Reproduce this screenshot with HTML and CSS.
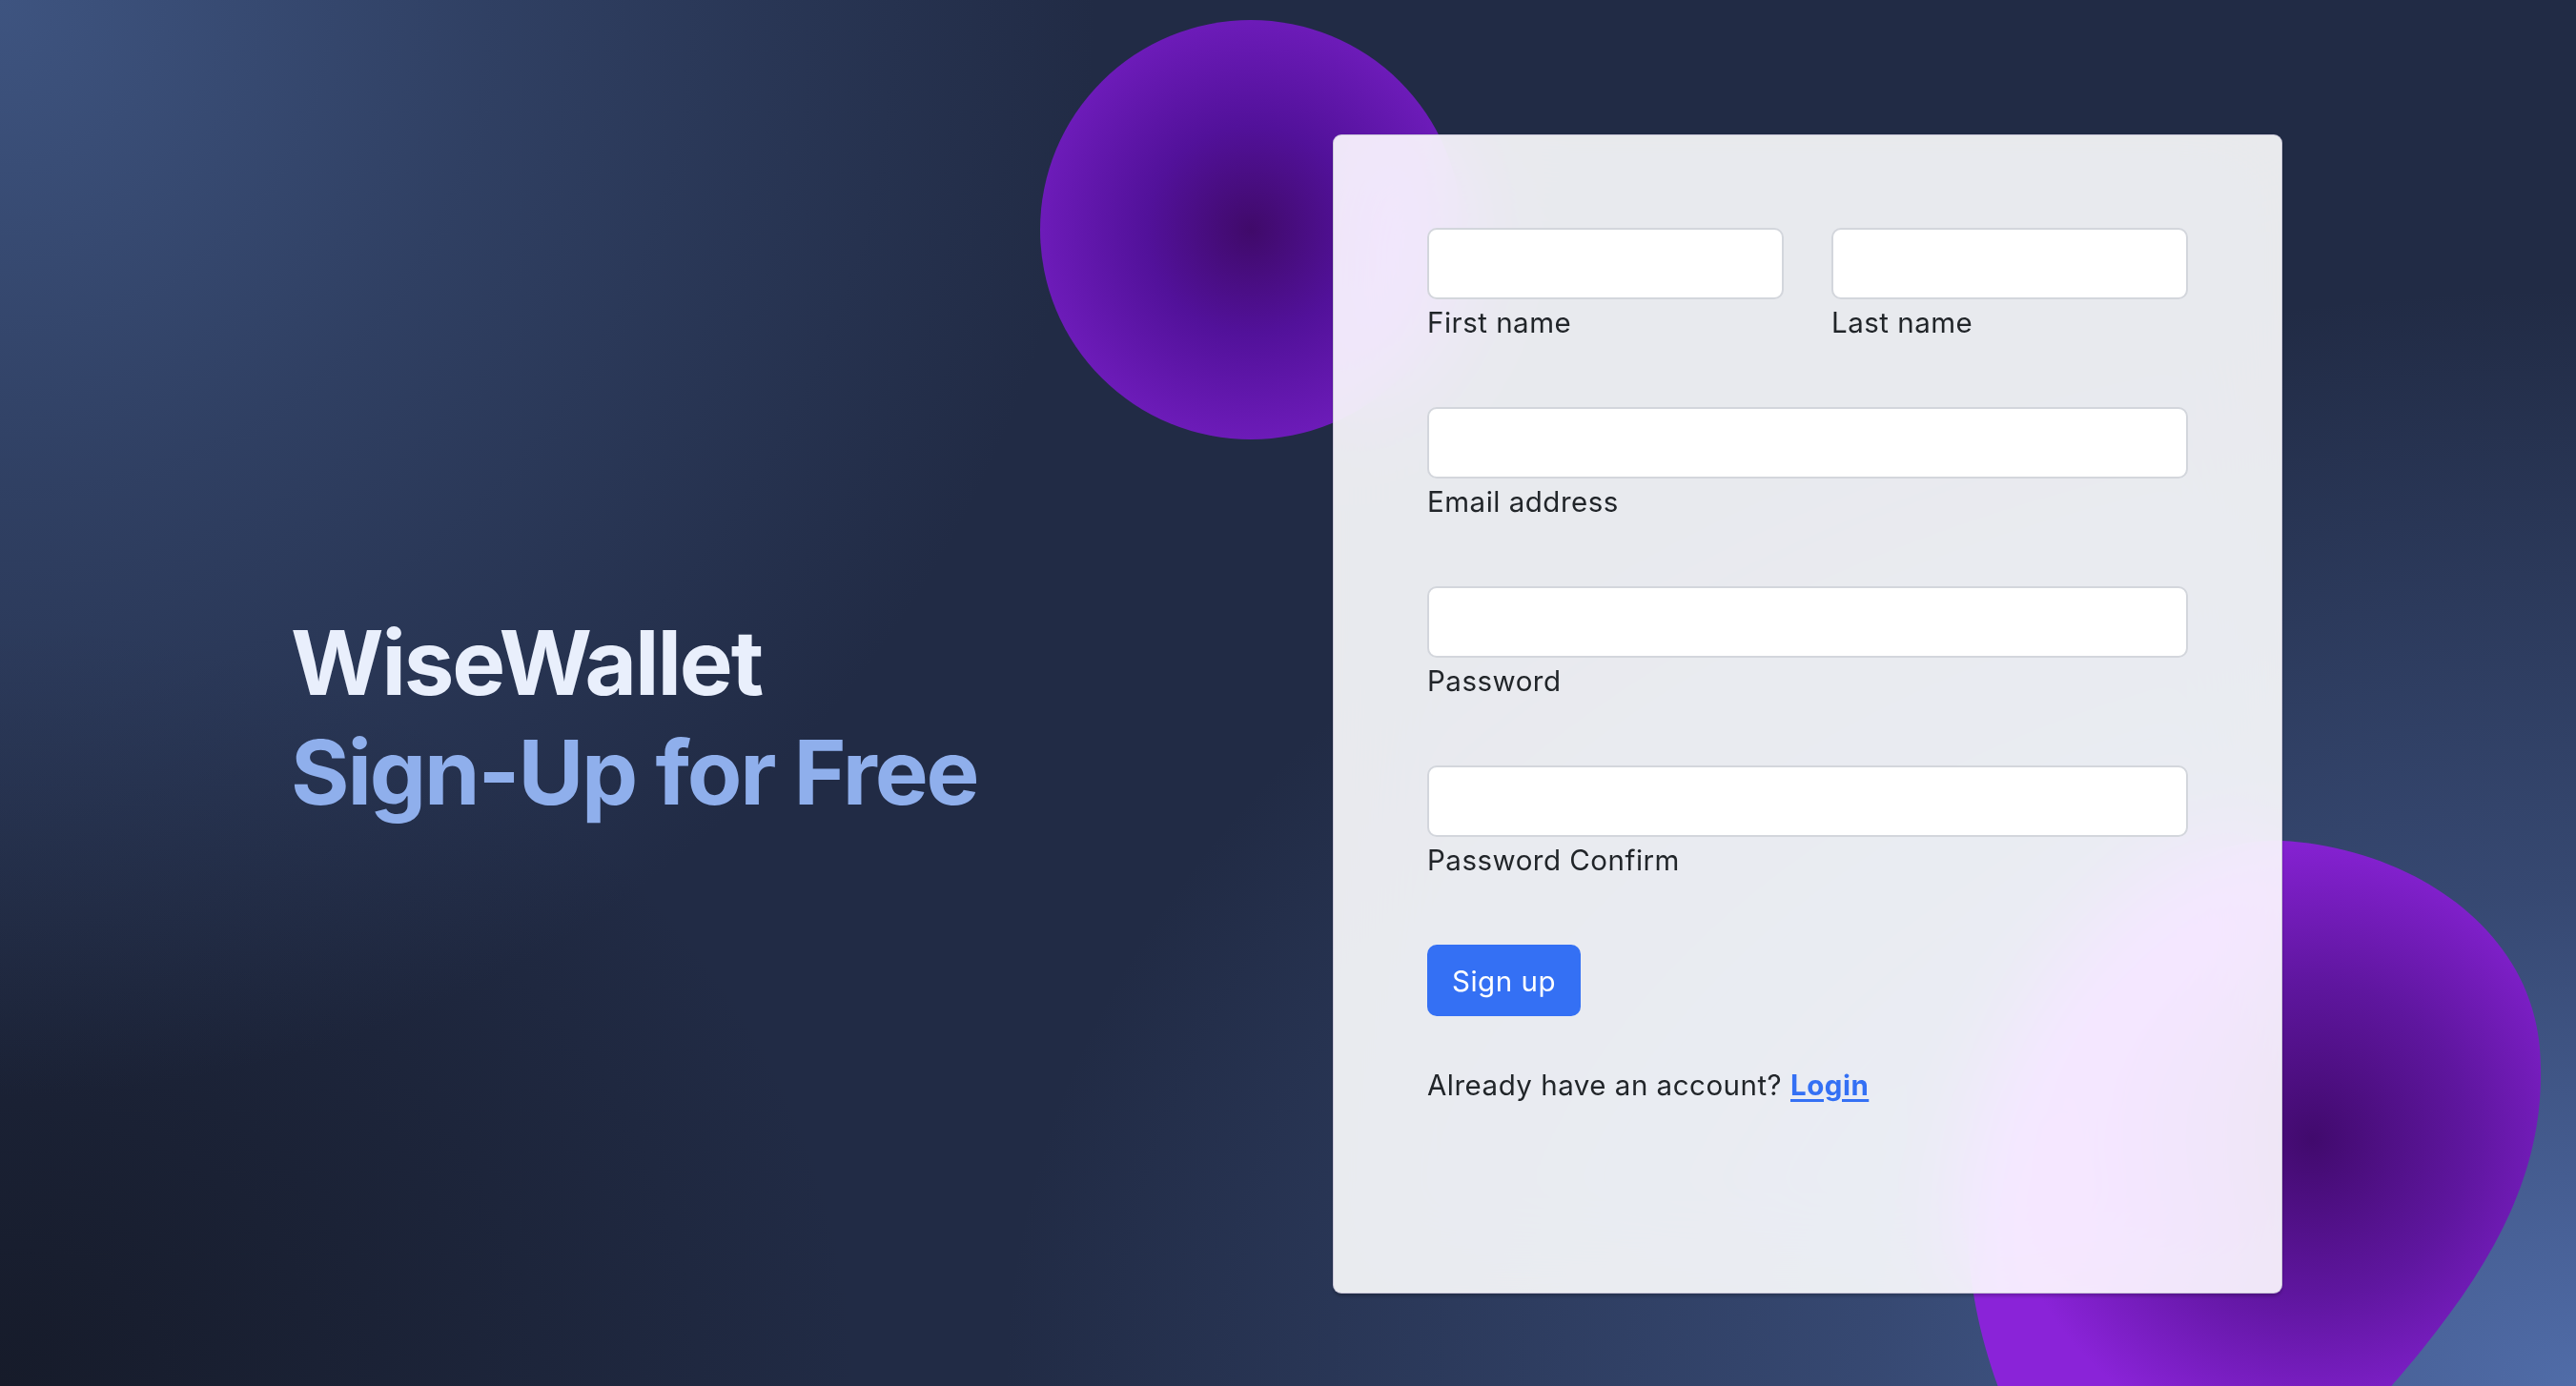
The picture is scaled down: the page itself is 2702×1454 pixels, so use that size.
FILE: index.html
```html
<!DOCTYPE html>
<html lang="en">
<head>
<meta charset="utf-8">
<title>WiseWallet – Sign up</title>
<link rel="stylesheet" href="styles.css">
</head>
<body>
<main class="page">
  <div class="blob blob-one"></div>
  <svg class="blob blob-two" viewBox="0 0 802 654" width="802" height="654" aria-hidden="true">
    <defs>
      <radialGradient id="blobTwoFill" gradientUnits="userSpaceOnUse" cx="525" cy="395" r="330">
        <stop offset="0" stop-color="#410a6d"/>
        <stop offset="0.5" stop-color="#5f169f"/>
        <stop offset="0.85" stop-color="#7d1fc7"/>
        <stop offset="1" stop-color="#8a23d8"/>
      </radialGradient>
    </defs>
    <path fill="url(#blobTwoFill)" d="M 493 82 C 620 88, 765 170, 765 320 C 768 470, 675 590, 510 760 L 245 760 C 182 650, 145 520, 175 400 C 230 200, 380 76, 493 82 Z"/>
  </svg>

  <section class="hero">
    <h1 class="hero-title">WiseWallet<br><span class="hero-accent">Sign-Up for Free</span></h1>
  </section>

  <section class="card">
    <form class="signup-form">
      <div class="row two-col">
        <div class="field">
          <input class="input" type="text" id="first">
          <label class="label" for="first">First name</label>
        </div>
        <div class="field">
          <input class="input" type="text" id="last">
          <label class="label" for="last">Last name</label>
        </div>
      </div>
      <div class="row">
        <div class="field">
          <input class="input" type="email" id="email">
          <label class="label" for="email">Email address</label>
        </div>
      </div>
      <div class="row">
        <div class="field">
          <input class="input" type="password" id="pw">
          <label class="label" for="pw">Password</label>
        </div>
      </div>
      <div class="row">
        <div class="field">
          <input class="input" type="password" id="pw2">
          <label class="label" for="pw2">Password Confirm</label>
        </div>
      </div>
      <button class="btn" type="button">Sign up</button>
      <p class="already">Already have an account? <a class="login" href="#">Login</a></p>
    </form>
  </section>
</main>
</body>
</html>
```

FILE: styles.css
```css
* { box-sizing: border-box; }

html, body {
  margin: 0;
  padding: 0;
  width: 100%;
  height: 100%;
  overflow: hidden;
}

body {
  font-family: "Inter", "Noto Sans", "Liberation Sans", sans-serif;
  color: #212529;
  background-color: #212b45;
  background-image:
    radial-gradient(ellipse 1650px 1150px at 100% 100%, rgba(80,108,168,1) 0%, rgba(80,108,168,0.45) 45%, rgba(80,108,168,0) 100%),
    radial-gradient(ellipse 1150px 1150px at 0% 0%, rgba(62,84,128,1) 0%, rgba(62,84,128,0.5) 45%, rgba(62,84,128,0) 100%),
    radial-gradient(ellipse 900px 800px at 0% 100%, rgba(22,27,42,1) 0%, rgba(22,27,42,0) 100%);
}

.page {
  position: relative;
  width: 100%;
  height: 100%;
  display: flex;
  align-items: flex-start;
  overflow: hidden;
}

.blob {
  position: absolute;
  z-index: 0;
}

.blob-one {
  left: 1091px;
  top: 21px;
  width: 442px;
  height: 440px;
  border-radius: 50%;
  background: radial-gradient(circle at 50% 50%, #400a6a 0%, #52119a 35%, #6c1bb8 70%, #8722d2 100%);
}

.blob-two {
  left: 1900px;
  top: 800px;
  width: 802px;
  height: 654px;
  overflow: hidden;
}

.hero {
  position: relative;
  z-index: 1;
  flex: 1;
  padding-left: 305px;
  padding-top: 638px;
}

.hero-title {
  margin: 0;
  font-family: "Inter", "Noto Sans", sans-serif;
  font-weight: 700;
  font-size: 94px;
  line-height: 115px;
  letter-spacing: -2.1px;
  color: #e9effc;
}

.hero-accent {
  color: #8fafec;
}

.card {
  position: relative;
  z-index: 2;
  width: 996px;
  height: 1216px;
  margin-top: 141px;
  margin-right: 308px;
  padding: 97px 98px;
  border-radius: 9px;
  border: 1px solid rgba(200, 196, 214, 0.9);
  background: rgba(255, 255, 255, 0.9);
  -webkit-backdrop-filter: blur(50px) saturate(1.6);
  backdrop-filter: blur(50px) saturate(1.6);
  box-shadow: 0 3px 3px rgba(0, 0, 0, 0.18);
}

.signup-form {
  display: flex;
  flex-direction: column;
  align-items: flex-start;
}

.row {
  width: 100%;
  margin-bottom: 68px;
}

.two-col {
  display: grid;
  grid-template-columns: 1fr 1fr;
  column-gap: 50px;
}

.field {
  display: flex;
  flex-direction: column;
}

.input {
  display: block;
  width: 100%;
  height: 75px;
  border: 2px solid #d3d6dc;
  border-radius: 10px;
  background: #ffffff;
  font-family: inherit;
  font-size: 29px;
  padding: 0 20px;
  outline: none;
}

.label {
  display: block;
  margin-top: 4px;
  font-size: 29.5px;
  letter-spacing: 0.5px;
  line-height: 41px;
  color: #212529;
}

.btn {
  display: flex;
  align-items: center;
  justify-content: center;
  width: 161px;
  height: 75px;
  border: none;
  border-radius: 10px;
  background: #3470f4;
  color: #ffffff;
  font-family: inherit;
  font-size: 29.5px;
  letter-spacing: 0.5px;
  padding: 0;
  cursor: pointer;
}

.already {
  margin: 52px 0 0 0;
  font-size: 29.5px;
  letter-spacing: 0.5px;
  line-height: 41px;
  color: #212529;
}

.login {
  color: #3470f4;
  font-weight: 700;
  text-decoration: underline;
  text-decoration-thickness: 3px;
  text-underline-offset: 4px;
}
```
